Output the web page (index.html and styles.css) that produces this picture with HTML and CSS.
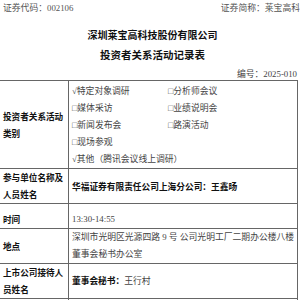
FILE: index.html
```html
<!DOCTYPE html>
<html lang="zh-CN">
<head>
<meta charset="utf-8">
<link rel="stylesheet" href="styles.css">
</head>
<body>
<div class="page">
  <div class="meta-top">
    <span class="code">证券代码：002106</span>
    <span class="short">证券简称：莱宝高科</span>
  </div>
  <div class="title">深圳莱宝高科技股份有限公司</div>
  <div class="subtitle">投资者关系活动记录表</div>
  <div class="number">编号：2025-010</div>
  <table class="record">
    <tr class="r-type">
      <th class="label">投资者关系活动类别</th>
      <td class="content">
        <div class="checks">
          <span>√特定对象调研</span><span>□分析师会议</span>
          <span>□媒体采访</span><span>□业绩说明会</span>
          <span>□新闻发布会</span><span>□路演活动</span>
          <span>□现场参观</span><span></span>
          <span class="wide">√其他（腾讯会议线上调研）</span>
        </div>
      </td>
    </tr>
    <tr class="r-part">
      <th class="label">参与单位名称及人员姓名</th>
      <td class="content strong">华福证券有限责任公司上海分公司：王鑫旸</td>
    </tr>
    <tr class="r-time">
      <th class="label">时间</th>
      <td class="content">13:30-14:55</td>
    </tr>
    <tr class="r-place">
      <th class="label">地点</th>
      <td class="content">深圳市光明区光源四路 9 号 公司光明工厂二期办公楼八楼董事会秘书办公室</td>
    </tr>
    <tr class="r-recv">
      <th class="label">上市公司接待人员姓名</th>
      <td class="content"><b class="strong">董事会秘书：</b>王行村</td>
    </tr>
    <tr class="r-next">
      <th class="label"></th>
      <td class="content"></td>
    </tr>
  </table>
</div>
</body>
</html>
```

FILE: styles.css
```css
html, body {
  margin: 0;
  padding: 0;
  background: #fff;
}
body {
  font-family: "Liberation Serif", "Noto Sans CJK SC", serif;
  color: #444;
  font-size: 8.8px;
  overflow: hidden;
}
.page {
  width: 300px;
}
.meta-top {
  display: flex;
  justify-content: space-between;
  padding: 2px 0 0 3px;
  height: 14px;
  line-height: 12px;
  color: #555;
  white-space: nowrap;
}
.title {
  font-family: "Noto Sans CJK SC", sans-serif;
  font-weight: 700;
  font-size: 10px;
  text-align: center;
  padding-left: 5px;
  margin-top: 12px;
  line-height: 14px;
  color: #111;
}
.subtitle {
  font-family: "Noto Sans CJK SC", sans-serif;
  font-weight: 700;
  font-size: 10.5px;
  text-align: center;
  padding-left: 5px;
  margin-top: 6px;
  line-height: 14px;
  color: #111;
}
.number {
  text-align: right;
  padding-right: 3px;
  margin-top: 6px;
  line-height: 12px;
  height: 12px;
  color: #444;
}
.record {
  border-collapse: collapse;
  width: 298px;
  table-layout: fixed;
}
.record th, .record td {
  border-top: 1px solid #666;
  border-bottom: 1px solid #666;
  padding: 0;
  vertical-align: middle;
  line-height: 17px;
}
.record .label {
  width: 65px;
  border-right: 1px solid #666;
  text-align: left;
  padding-left: 3px;
  font-family: "Noto Sans CJK SC", sans-serif;
  font-weight: 700;
  font-size: 8.6px;
  color: #111;
}
.record .content {
  border-right: 1px solid #666;
  padding-left: 3px;
  padding-right: 0;
}
.strong {
  font-family: "Noto Sans CJK SC", sans-serif;
  font-weight: 700;
  font-size: 8.7px;
  color: #111;
}
.checks {
  display: grid;
  grid-template-columns: 96px auto;
  padding-top: 1px;
}
.checks .wide {
  grid-column: 1 / 3;
}
.r-type { height: 88px; }
.r-part { height: 35px; }
.r-time { height: 24px; }
.r-time th, .r-time td { padding-top: 7px; }
.r-place { height: 33px; }
.r-recv { height: 34px; }
.r-next { height: 20px; }
```
